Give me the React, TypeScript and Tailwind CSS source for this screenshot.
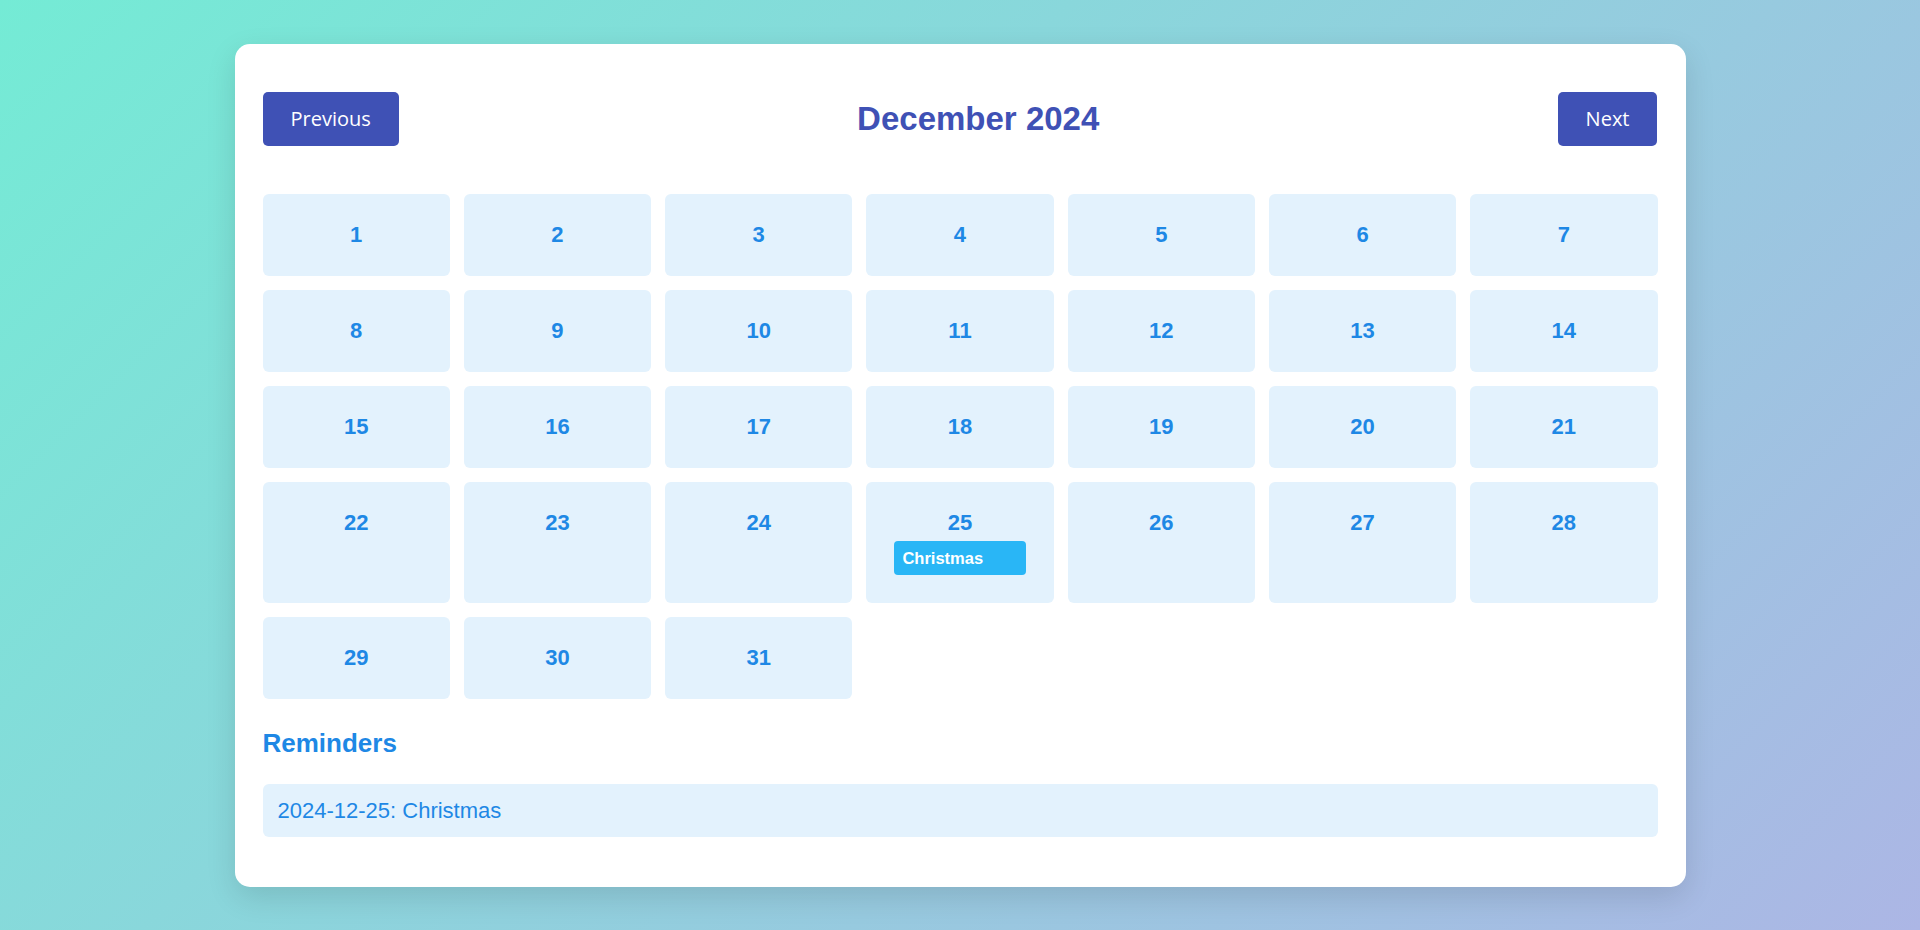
import React, { useState } from "react";

type Reminder = {
    date: string;
    text: string;
};

const MONTHS = [
    "January", "February", "March", "April", "May", "June",
    "July", "August", "September", "October", "November", "December",
];

const reminders: Reminder[] = [{ date: "2024-12-25", text: "Christmas" }];

const pad = (n: number) => String(n).padStart(2, "0");

export default function App() {
    const [view, setView] = useState({ year: 2024, month: 11 });

    const daysInMonth = new Date(view.year, view.month + 1, 0).getDate();
    const days = Array.from({ length: daysInMonth }, (_, i) => i + 1);

    const shift = (delta: number) => {
        setView((v) => {
            const d = new Date(v.year, v.month + delta, 1);
            return { year: d.getFullYear(), month: d.getMonth() };
        });
    };

    const monthReminders = reminders.filter((r) =>
        r.date.startsWith(`${view.year}-${pad(view.month + 1)}`)
    );

    return (
        <div className="flex min-h-screen items-center justify-center bg-[linear-gradient(135deg,#74ebd5,#acb6e5)] font-['Liberation_Sans',Arial,sans-serif]">
            <div className="w-[1451px] rounded-[15px] bg-white px-[28px] pb-[50px] pt-[48px] shadow-[0_10px_30px_rgba(0,0,0,0.12)]">
                <div className="mb-[48px] flex items-center justify-between">
                    <button
                        className="flex h-[54px] items-center rounded-[5px] bg-[#3f51b5] px-[28px] font-['Open_Sans',sans-serif] text-[20px] text-white"
                        onClick={() => shift(-1)}
                    >
                        Previous
                    </button>
                    <h1 className="text-[33px] font-bold leading-[38px] text-[#3f51b5]">
                        {MONTHS[view.month]} {view.year}
                    </h1>
                    <button
                        className="flex h-[54px] items-center rounded-[5px] bg-[#3f51b5] px-[28px] font-['Open_Sans',sans-serif] text-[20px] text-white"
                        onClick={() => shift(1)}
                    >
                        Next
                    </button>
                </div>

                <div className="mb-[29px] grid grid-cols-7 gap-[14px]">
                    {days.map((day) => {
                        const key = `${view.year}-${pad(view.month + 1)}-${pad(day)}`;
                        const events = reminders.filter((r) => r.date === key);
                        return (
                            <div
                                key={day}
                                className="flex flex-col items-center rounded-[6px] bg-[#e3f2fd] pb-[28px] pt-[28px]"
                            >
                                <span className="text-[22px] font-bold leading-[26px] text-[#1e88e5]">{day}</span>
                                {events.map((e) => (
                                    <div
                                        key={e.text}
                                        className="mt-[5px] h-[34px] w-[70%] rounded-[4px] bg-[#29b6f6] px-[8px] text-[16.5px] font-bold leading-[34px] text-white"
                                    >
                                        {e.text}
                                    </div>
                                ))}
                            </div>
                        );
                    })}
                </div>

                <h2 className="mb-[26px] text-[26px] font-bold leading-[30px] text-[#1e88e5]">Reminders</h2>
                <ul>
                    {monthReminders.map((r) => (
                        <li
                            key={r.date + r.text}
                            className="rounded-[6px] bg-[#e3f2fd] px-[15px] py-[14px] text-[22px] leading-[25px] text-[#1e88e5]"
                        >
                            {r.date}: {r.text}
                        </li>
                    ))}
                </ul>
            </div>
        </div>
    );
}
